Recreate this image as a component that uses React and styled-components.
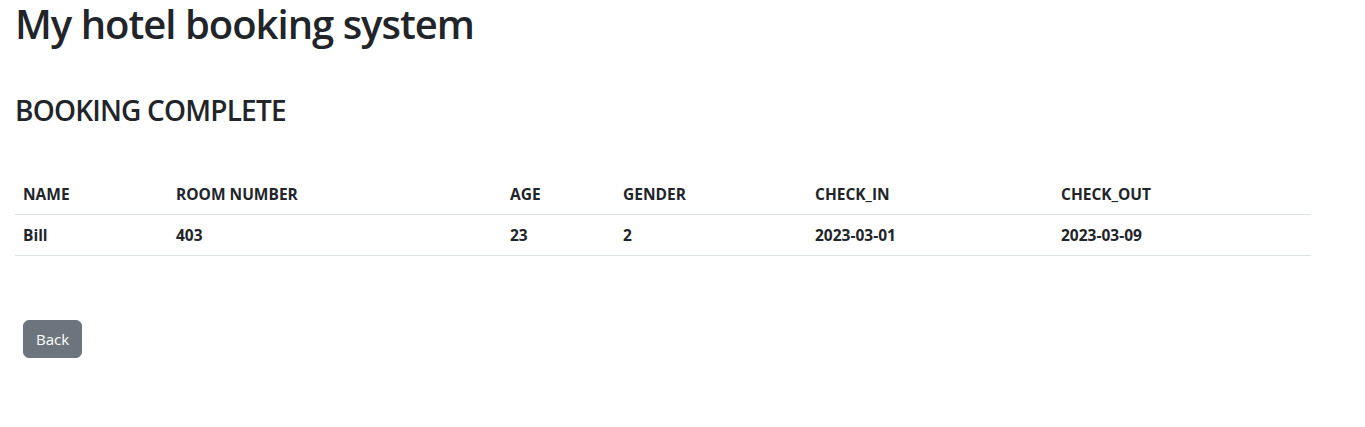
import React from "react";
import styled, { createGlobalStyle } from "styled-components";

const GlobalStyle = createGlobalStyle`
  body {
    margin: 0;
    background: #fff;
    color: #212529;
    font-family: "Open Sans", "Noto Sans", sans-serif;
    font-size: 16px;
    line-height: 1.5;
  }
`;

const Page = styled.div`
  padding: 0 54px 0 15px;
`;

const Title = styled.h1`
  margin: 0 0 46px;
  font-size: 40px;
  font-weight: 600;
  letter-spacing: -1px;
  line-height: 48px;
`;

const Subtitle = styled.h3`
  margin: 0 0 48px;
  font-size: 28px;
  font-weight: 600;
  letter-spacing: -0.8px;
  line-height: 32px;
`;

const Table = styled.table`
  width: 1296px;
  table-layout: fixed;
  border-collapse: collapse;
  margin-bottom: 64px;
`;

const Cell = styled.td`
  width: ${(p) => p.w - 16}px;
  padding: 8px;
  text-align: left;
  font-weight: 700;
  font-size: 15.5px;
  line-height: 24px;
  border-bottom: 1px solid #dee2e6;
`;

const ButtonRow = styled.div`
  padding-left: 8px;
`;

const Button = styled.button`
  font-family: inherit;
  font-size: 15px;
  line-height: 24px;
  padding: 6px 12px;
  color: #fff;
  background: #6c757d;
  border: 1px solid #6c757d;
  border-radius: 6px;
`;

const COLUMNS = [
  { label: "NAME", w: 153 },
  { label: "ROOM NUMBER", w: 334 },
  { label: "AGE", w: 113 },
  { label: "GENDER", w: 192 },
  { label: "CHECK_IN", w: 246 },
  { label: "CHECK_OUT", w: 258 },
];

const ROW = ["Bill", "403", "23", "2", "2023-03-01", "2023-03-09"];

const App = () => {
  return (
    <Page>
      <GlobalStyle />
      <Title>My hotel booking system</Title>
      <Subtitle>BOOKING COMPLETE</Subtitle>
      <Table>
        <thead>
          <tr>
            {COLUMNS.map((col) => (
              <Cell as="th" key={col.label} w={col.w}>
                {col.label}
              </Cell>
            ))}
          </tr>
        </thead>
        <tbody>
          <tr>
            {ROW.map((value, i) => (
              <Cell key={i} w={COLUMNS[i].w}>
                {value}
              </Cell>
            ))}
          </tr>
        </tbody>
      </Table>
      <ButtonRow>
        <Button>Back</Button>
      </ButtonRow>
    </Page>
  );
};

export default App;
